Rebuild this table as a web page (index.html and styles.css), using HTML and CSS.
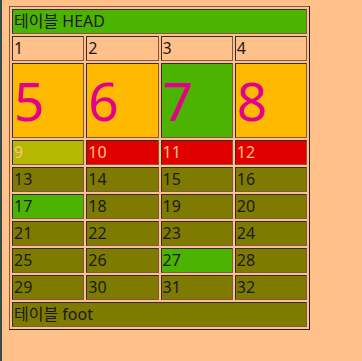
FILE: index.html
```html
<!DOCTYPE html>
<html lang="ko">
<head>
<meta charset="utf-8">
<title>테이블</title>
<link rel="stylesheet" href="styles.css">
</head>
<body>
<table class="grid">
  <thead>
    <tr><th class="head green" colspan="4">테이블 HEAD</th></tr>
  </thead>
  <tbody>
    <tr class="row-plain"><td>1</td><td>2</td><td>3</td><td>4</td></tr>
    <tr class="row-big"><td class="gold">5</td><td class="gold">6</td><td class="green">7</td><td class="gold">8</td></tr>
    <tr class="row-light"><td class="lime">9</td><td class="red">10</td><td class="red">11</td><td class="red">12</td></tr>
    <tr class="row-olive"><td>13</td><td>14</td><td>15</td><td>16</td></tr>
    <tr class="row-olive"><td class="green">17</td><td>18</td><td>19</td><td>20</td></tr>
    <tr class="row-olive"><td>21</td><td>22</td><td>23</td><td>24</td></tr>
    <tr class="row-olive"><td>25</td><td>26</td><td class="green">27</td><td>28</td></tr>
    <tr class="row-olive"><td>29</td><td>30</td><td>31</td><td>32</td></tr>
  </tbody>
  <tfoot>
    <tr><td class="foot" colspan="4">테이블 foot</td></tr>
  </tfoot>
</table>
</body>
</html>
```
FILE: styles.css
```css
html {
  height: 361px;
  overflow: hidden;
  background: #ffc08a linear-gradient(to right, #3b4a44 2px, #ffc08a 2px);
}
body {
  margin: 6px 0 0 9px;
  font-family: "Noto Sans", "Noto Sans CJK KR", sans-serif;
  font-size: 16px;
  color: #1a1a1a;
}
.grid {
  width: 301px;
  table-layout: fixed;
  border-collapse: separate;
  border-spacing: 2px;
  border: 1px solid;
  border-color: #7d5a45 #1e1e1e #1e1e1e #7d5a45;
}
.grid th,
.grid td {
  padding: 1px;
  border: 1px solid;
  border-color: #2e2e2e #7d5a45 #7d5a45 #2e2e2e;
  line-height: 21px;
  text-align: left;
  font-weight: normal;
  vertical-align: middle;
  white-space: nowrap;
}
.grid .head {
  background: #4cb300;
}
.row-big td {
  font-size: 53.33px;
  line-height: 71px;
  color: #e3008c;
}
.row-light td {
  color: #ffc08a;
}
.row-olive td,
.grid .foot {
  background: #7f7a00;
}
.grid .gold { background: #ffb900; }
.grid .green { background: #4cb300; }
.grid .lime { background: #b5b800; }
.grid .red { background: #e10000; }
```
